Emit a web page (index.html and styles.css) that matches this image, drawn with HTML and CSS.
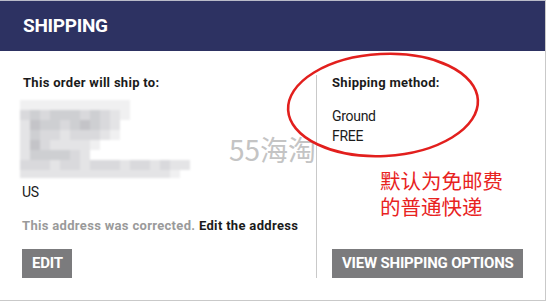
FILE: index.html
```html
<!DOCTYPE html>
<html lang="en">
<head>
<meta charset="utf-8">
<title>Shipping</title>
<link rel="stylesheet" href="styles.css">
</head>
<body>
<div class="card">
  <div class="header"><h1 class="title">SHIPPING</h1></div>
  <div class="body">
    <div class="col col-left">
      <h2 class="label">This order will ship to:</h2>
      <div class="addr">
        <span class="f"></span><span class="f"></span><span class="f"></span><span class="f"></span><span class="f"></span><span class="f"></span><span class="f"></span><span class="f"></span><span class="f"></span><span class="f"></span><span class="f"></span><span></span><span></span><span></span><span></span><span></span><span></span>
        <span class="c"></span><span class="b"></span><span class="c"></span><span class="b"></span><span class="b"></span><span class="b"></span><span class="c"></span><span class="b"></span><span class="c"></span><span class="d"></span><span class="f"></span><span></span><span></span><span></span><span></span><span></span><span></span>
        <span class="d"></span><span class="a"></span><span class="b"></span><span class="b"></span><span class="c"></span><span class="b"></span><span class="a"></span><span class="b"></span><span class="c"></span><span class="d"></span><span></span><span></span><span></span><span></span><span></span><span></span><span></span>
        <span class="d"></span><span class="b"></span><span class="c"></span><span class="c"></span><span class="d"></span><span class="c"></span><span class="c"></span><span class="c"></span><span class="d"></span><span class="f"></span><span></span><span></span><span></span><span></span><span></span><span></span><span></span>
        <span class="d"></span><span class="a"></span><span class="c"></span><span class="d"></span><span class="d"></span><span class="d"></span><span class="d"></span><span class="f"></span><span></span><span></span><span></span><span></span><span></span><span></span><span></span><span></span><span></span>
        <span class="d"></span><span class="b"></span><span class="b"></span><span class="b"></span><span class="b"></span><span class="c"></span><span class="d"></span><span></span><span></span><span></span><span></span><span></span><span></span><span></span><span></span><span></span><span></span>
        <span class="c"></span><span class="c"></span><span class="c"></span><span class="d"></span><span class="c"></span><span class="c"></span><span class="d"></span><span class="c"></span><span class="c"></span><span class="c"></span><span class="d"></span><span class="c"></span><span class="c"></span><span class="d"></span><span class="c"></span><span class="d"></span><span class="d"></span>
        <span class="d"></span><span class="d"></span><span class="d"></span><span class="d"></span><span class="d"></span><span class="d"></span><span class="d"></span><span class="d"></span><span class="d"></span><span class="d"></span><span class="d"></span><span class="d"></span><span class="d"></span><span class="d"></span><span class="d"></span><span class="f"></span><span></span>
      </div>
      <p class="country">US</p>
      <p class="note"><span class="muted">This address was corrected.</span> <a class="link" href="#">Edit the address</a></p>
      <button class="btn" type="button">EDIT</button>
    </div>
    <div class="col col-right">
      <h2 class="label">Shipping method:</h2>
      <p class="method">Ground<br>FREE</p>
      <p class="cn"><span class="cn-line">默认为免邮费</span><span class="cn-line">的普通快递</span></p>
      <button class="btn" type="button">VIEW SHIPPING OPTIONS</button>
    </div>
  </div>
  <div class="watermark">55海淘</div>
  <svg class="ring" width="200" height="112" viewBox="0 0 200 112" aria-hidden="true">
    <ellipse cx="98" cy="55" rx="95" ry="51" fill="none" stroke="#e21f1d" stroke-width="2.6" transform="rotate(-3 98 55)"/>
  </svg>
</div>
</body>
</html>
```
FILE: styles.css
```css
* { box-sizing: border-box; }
html, body { margin: 0; padding: 0; background: #fff; }
body { font-family: Roboto, "Noto Sans CJK SC", sans-serif; color: #1b1b1b; }

.card {
  position: relative;
  width: 546px;
  height: 301px;
  border-right: 1px solid #c9c9c9;
  border-bottom: 1px solid #c9c9c9;
  border-top: 1px solid #b9bbc8;
}

.header {
  background: #2d3262;
  height: 50px;
  padding: 0 23px;
  display: flex;
  align-items: center;
}
.title {
  margin: 0;
  color: #fff;
  font-family: Roboto, sans-serif;
  font-weight: 700;
  font-size: 19px;
  letter-spacing: -0.3px;
  line-height: 1;
  padding-bottom: 1px;
}

.body {
  display: flex;
  padding: 24px 0 0;
}
.col { display: flex; flex-direction: column; align-items: flex-start; }
.col-left { width: 316px; padding-left: 22px; }
.col-right {
  flex: 1;
  border-left: 1px solid #c9c9c9;
  padding-left: 15px;
  height: 203px;
}

.label {
  margin: 0;
  font-size: 13px;
  font-weight: 700;
  line-height: 16px;
  letter-spacing: 0.3px;
  color: #1b1b1b;
}
.col-left .label { margin-left: 1px; }

.addr {
  margin: 9px 0 0 -2px;
  display: grid;
  grid-template-columns: repeat(17, 10px);
  grid-template-rows: repeat(7, 10px) 8px;
  filter: blur(1px);
}
.addr .a { background: #c4c4c8; }
.addr .b { background: #cecfd2; }
.addr .c { background: #d9d9dc; }
.addr .d { background: #e4e4e6; }
.addr .f { background: #f0f0f1; }

.country {
  margin: 6px 0 0;
  font-size: 14px;
  line-height: 17px;
  letter-spacing: -0.3px;
}

.note {
  margin: 16px 0 0;
  font-size: 13px;
  font-weight: 700;
  line-height: 17px;
  letter-spacing: 0.32px;
}
.muted { color: #9a9a9a; }
.link { color: #1b1b1b; text-decoration: none; }

.btn {
  margin-top: 15px;
  height: 29px;
  padding: 0 9px 0 10px;
  border: 0;
  border-radius: 0;
  background: #7b7b7d;
  color: #fff;
  font-family: Roboto, sans-serif;
  font-weight: 700;
  font-size: 15px;
  letter-spacing: -0.2px;
  line-height: 29px;
  cursor: pointer;
}

.method {
  margin: 16px 0 0;
  font-size: 14px;
  line-height: 19.5px;
  letter-spacing: -0.3px;
}

.cn {
  margin: 21px 0 0 48px;
  color: #e8231f;
  font-family: "Noto Sans CJK SC", sans-serif;
  font-size: 20.5px;
  display: flex;
  flex-direction: column;
}
.cn-line { display: block; height: 26px; line-height: 26px; }

.col-right .btn { margin-top: 30px; }

.watermark {
  position: absolute;
  left: 229px;
  top: 132px;
  font-family: "Noto Sans CJK SC", sans-serif;
  font-size: 28px;
  line-height: 32px;
  color: #c4c4c4;
  letter-spacing: 0;
}

.ring {
  position: absolute;
  left: 285px;
  top: 49px;
}
```
